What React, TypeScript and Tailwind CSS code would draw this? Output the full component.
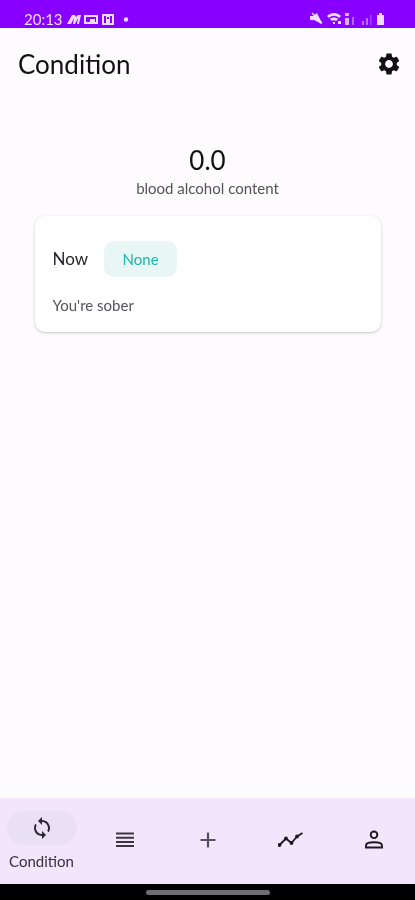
import React from "react";

const Gear = () => (
  <svg width="26" height="26" viewBox="0 0 24 24" fill="#111">
    <path fillRule="evenodd" d="M19.14 12.94c.04-.3.06-.61.06-.94 0-.32-.02-.64-.07-.94l2.03-1.58c.18-.14.23-.41.12-.61l-1.92-3.32c-.12-.22-.37-.29-.59-.22l-2.39.96c-.5-.38-1.03-.7-1.62-.94l-.36-2.54c-.04-.24-.24-.41-.48-.41h-3.84c-.24 0-.43.17-.47.41l-.36 2.54c-.59.24-1.13.57-1.62.94l-2.39-.96c-.22-.08-.47 0-.59.22L2.74 8.87c-.12.21-.08.47.12.61l2.03 1.58c-.05.3-.09.63-.09.94s.02.64.07.94l-2.03 1.58c-.18.14-.23.41-.12.61l1.92 3.32c.12.22.37.29.59.22l2.39-.96c.5.38 1.03.7 1.62.94l.36 2.54c.05.24.24.41.48.41h3.84c.24 0 .44-.17.47-.41l.36-2.54c.59-.24 1.13-.56 1.62-.94l2.39.96c.22.08.47 0 .59-.22l1.92-3.32c.12-.22.07-.47-.12-.61l-2.01-1.58zM12 15.6c-1.98 0-3.6-1.62-3.6-3.6s1.62-3.6 3.6-3.6 3.6 1.62 3.6 3.6-1.62 3.6-3.6 3.6z" />
  </svg>
);

const Sync = () => (
  <svg width="24" height="24" viewBox="0 0 24 24" fill="#2b2730">
    <path d="M12 4V1L8 5l4 4V6c3.31 0 6 2.69 6 6 0 1.01-.25 1.97-.7 2.8l1.46 1.46C19.54 15.03 20 13.57 20 12c0-4.42-3.58-8-8-8zm0 14c-3.31 0-6-2.69-6-6 0-1.01.25-1.97.7-2.8L5.24 7.74C4.46 8.97 4 10.43 4 12c0 4.42 3.58 8 8 8v3l4-4-4-4v3z" />
  </svg>
);

const Menu = () => (
  <svg width="24" height="24" viewBox="0 0 24 24" fill="none" stroke="#3a3640" strokeWidth="2">
    <path d="M3 5.5h18M3 9.7h18M3 13.9h18M3 18.1h18" />
  </svg>
);

const Plus = () => (
  <svg width="24" height="24" viewBox="0 0 24 24" fill="none" stroke="#56525c" strokeWidth="2.2">
    <path d="M12 4.5v15M4.5 12h15" />
  </svg>
);

const Trend = () => (
  <svg width="26" height="24" viewBox="0 0 26 24" fill="none" stroke="#1c1a20" strokeWidth="1.8" strokeLinejoin="round">
    <path d="M1.5 17 8 10.5l5.5 4.5L19 8.5l5.5-3.5" />
    <circle cx="1.5" cy="17" r="1" fill="#1c1a20" />
    <circle cx="8" cy="10.5" r="1" fill="#1c1a20" />
    <circle cx="13.5" cy="15" r="1" fill="#1c1a20" />
    <circle cx="19" cy="8.5" r="1" fill="#1c1a20" />
  </svg>
);

const Person = () => (
  <svg width="24" height="24" viewBox="0 0 24 24" fill="none" stroke="#1c1a20" strokeWidth="1.9">
    <circle cx="12" cy="6.8" r="3.3" />
    <path d="M4 19.5v-2c0-1.9 3.4-3.2 8-3.2s8 1.3 8 3.2v2z" />
  </svg>
);

const StatusLeft = () => (
  <div className="flex items-center">
    <span className="text-[15px] leading-none text-[#eedcff] w-[41px]">20:13</span>
    <svg width="64" height="14" viewBox="0 0 64 14" fill="#eedcff">
      <path d="M2 12 7 3h3l1 2 2-2h3l-2 9h-2l1-6-3 6H8l1-6-3 6z" />
      <path fillRule="evenodd" d="M19 3h14v9H19zm2 2v5h10V5z" />
      <rect x="25" y="7" width="5" height="3" />
      <path fillRule="evenodd" d="M37 2h12v11H37zm2 2v7h2V4zm3 1v2h2V5zm3-1v7h2V4z" />
      <circle cx="61" cy="7.5" r="2.2" />
    </svg>
  </div>
);

const StatusRight = () => (
  <svg width="79" height="16" viewBox="0 0 79 16" fill="#eedcff">
    <path d="M1 5h3l4-3 1 2 4 8-1 1-3-2-4-2H1z" />
    <path d="m3 2 10 10" stroke="#eedcff" strokeWidth="1.4" />
    <path d="M18 5c4-4 10-4 14 0l-2 2c-3-3-7-3-10 0zM21 8c2-2 6-2 8 0l-2 2c-1-1-3-1-4 0zM24 11h2v2h-2z" />
    <rect x="29" y="10" width="3" height="3" />
    <rect x="36" y="2" width="4" height="3" opacity=".8" />
    <rect x="36" y="7" width="4" height="7" opacity=".8" />
    <rect x="43" y="6" width="2" height="8" opacity=".45" />
    <rect x="53" y="10" width="2" height="4" opacity=".5" />
    <rect x="57" y="7" width="2" height="7" opacity=".5" />
    <rect x="61" y="4" width="1.5" height="10" opacity=".3" />
    <path d="M68 4h2V2h3v2h2v10h-7z" />
  </svg>
);

const NavItem = ({ children }: { children: React.ReactNode }) => (
  <div className="flex flex-1 items-center justify-center h-full pb-[2px]">{children}</div>
);

export default function App() {
  return (
    <div className="flex h-[900px] w-[415px] flex-col bg-[#fefbff] overflow-hidden blur-[0.4px]" style={{ fontFamily: "Lato, 'Noto Sans', sans-serif" }}>
      <div className="flex h-[28px] shrink-0 items-center justify-between bg-[#8800ff] pl-[24px] pr-[27px] pt-[11px] pb-[1px]">
        <StatusLeft />
        <StatusRight />
      </div>

      <div className="flex h-[71px] shrink-0 items-center justify-between pl-[18px] pr-[13px]">
        <h1 className="text-[26px] leading-none text-[#111]">Condition</h1>
        <Gear />
      </div>

      <div className="flex flex-1 flex-col items-center pt-[46px]">
        <div className="text-[26px] leading-[30px] text-[#111]">0.0</div>
        <div className="mt-[3px] text-[15px] leading-[20px] text-[#55525a]">blood alcohol content</div>

        <div className="mt-[18px] h-[116px] w-[346px] rounded-[10px] bg-white px-[18px] pt-[25px] shadow-[0_1px_3px_rgba(0,0,0,0.22)]">
          <div className="flex items-center">
            <span className="text-[17px] text-[#26242a]">Now</span>
            <span className="ml-[16px] flex h-[36px] w-[73px] items-center justify-center rounded-[10px] bg-[#e8f7f5] text-[15px] text-[#1fb5a8]">None</span>
          </div>
          <div className="mt-[19px] text-[15px] leading-[18px] text-[#55525a]">You're sober</div>
        </div>
      </div>

      <nav className="flex h-[86px] shrink-0 items-stretch bg-[#f3e5fc]">
        <div className="flex w-[83px] flex-col items-center pt-[13px]">
          <div className="flex h-[34px] w-[70px] items-center justify-center rounded-full bg-[#e9e0f4]">
            <Sync />
          </div>
          <span className="mt-[7px] text-[15px] leading-[18px] text-[#35313a]">Condition</span>
        </div>
        <NavItem><Menu /></NavItem>
        <NavItem><Plus /></NavItem>
        <NavItem><Trend /></NavItem>
        <NavItem><Person /></NavItem>
      </nav>

      <div className="flex h-[16px] shrink-0 items-center justify-center bg-black">
        <div className="h-[5px] w-[124px] rounded-full bg-[#6e6e6e]" />
      </div>
    </div>
  );
}
